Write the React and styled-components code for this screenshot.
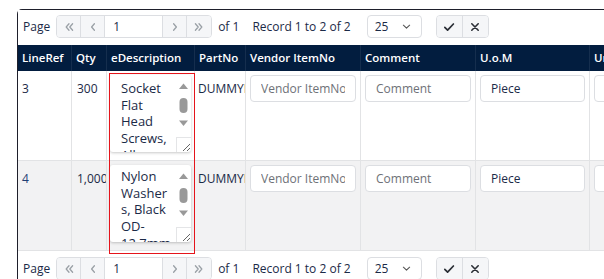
import React from 'react';
import styled, { createGlobalStyle } from 'styled-components';

const GlobalStyle = createGlobalStyle`
  html, body { margin: 0; padding: 0; background: #fff; overflow: hidden; }
  body { font-family: "Open Sans", "Noto Sans", sans-serif; font-size: 12px; color: #1b2a47; }
  * { box-sizing: border-box; }
`;

const COLS = '54px 35px 88px 51px 115px 115px 114px 115px';

const Frame = styled.div`
  position: relative;
  margin: 9px 0 0 17px;
  width: 720px;
  border-top: 1px solid #1e1f2b;
  border-left: 1px solid #1e1f2b;
  border-top-left-radius: 5px;
`;

const Pager = styled.div`
  display: flex;
  align-items: flex-start;
  height: ${p => (p.$bottom ? '30px' : '35px')};
  padding: ${p => (p.$bottom ? '6px' : '5px')} 0 0 5px;
  background: #fff;
`;

const Label = styled.span`
  line-height: 23px;
  margin-left: ${p => p.$gap || 0}px;
  white-space: nowrap;
  color: #1b2a47;
`;

const Group = styled.div`
  display: flex;
  height: 23px;
  margin-left: ${p => p.$gap || 0}px;
  border: 1px solid #dcdee2;
  border-radius: 4px;
  overflow: hidden;
`;

const NavButton = styled.div`
  width: ${p => p.$w || 24}px;
  height: 100%;
  display: flex;
  align-items: center;
  justify-content: center;
  background: #f5f6f8;
  border-right: 1px solid #dcdee2;
  &:last-child { border-right: none; }
`;

const PageInput = styled.div`
  width: 58px;
  height: 100%;
  background: #fff;
  border-right: 1px solid #dcdee2;
  padding-left: 8px;
  line-height: 21px;
  color: #1b2a47;
`;

const Select = styled.div`
  display: flex;
  align-items: center;
  justify-content: space-between;
  width: 55px;
  height: 23px;
  margin-left: 16px;
  padding: 0 9px 0 7px;
  border: 1px solid #dcdee2;
  border-radius: 4px;
  background: #fff;
  color: #1b2a47;
`;

const HeaderRow = styled.div`
  display: grid;
  grid-template-columns: ${COLS};
  height: 26px;
  background: #021d3f;
`;

const HeaderCell = styled.div`
  padding: 0 4px;
  line-height: 26px;
  font-size: 11.5px;
  color: #fff;
  font-weight: 600;
  white-space: nowrap;
  overflow: hidden;
  border-right: 1px solid rgba(255, 255, 255, 0.08);
`;

const Row = styled.div`
  display: grid;
  grid-template-columns: ${COLS};
  height: 90px;
  background: ${p => (p.$alt ? '#f2f2f3' : '#fff')};
  border-bottom: 1px solid #e2e3e5;
`;

const Cell = styled.div`
  padding: 4px;
  padding-left: ${p => p.$pl || 4}px;
  overflow: hidden;
  border-right: 1px solid #e2e3e5;
`;

const CellText = styled.div`
  line-height: 27px;
  white-space: nowrap;
  color: ${p => (p.$link ? '#1f3f73' : '#1b2a47')};
`;

const Field = styled.input`
  display: block;
  width: 100%;
  height: 27px;
  padding: 0 10px;
  border: 1px solid #dcdee2;
  border-radius: 4px;
  background: #fff;
  font-family: "Open Sans", "Noto Sans", sans-serif;
  font-size: 12px;
  color: #1b2a47;
  outline: none;
  &::placeholder { color: #6e7177; }
`;

const DescBox = styled.div`
  display: flex;
  width: 81px;
  height: 77px;
  margin-left: -1px;
  background: #fff;
  border-radius: 3px;
  box-shadow: 0 1px 3px rgba(0, 0, 0, 0.22);
  overflow: hidden;
`;

const DescText = styled.div`
  flex: 1;
  padding: ${p => p.$pt || 5}px 4px 0 11px;
  font-size: 13px;
  line-height: 16.7px;
  color: #1b2a47;
  overflow: hidden;
  overflow-wrap: break-word;
`;

const ScrollCol = styled.div`
  width: 15px;
  flex: none;
  display: flex;
  flex-direction: column;
  justify-content: space-between;
`;

const Grip = styled.div`
  width: 15px;
  height: 15px;
  border-top: 1px solid #e4e5e7;
  border-left: 1px solid #e4e5e7;
  display: flex;
  align-items: flex-end;
  justify-content: flex-end;
`;

const Annotation = styled.div`
  position: absolute;
  left: 91px;
  top: 63px;
  width: 86px;
  height: 181px;
  border: 1px solid #e5141b;
  pointer-events: none;
`;

const Icon = ({ d, color = '#9aa0a6', w = 1.3, size = 12 }) => (
  <svg width={size} height={size} viewBox="0 0 12 12" fill="none">
    <path d={d} stroke={color} strokeWidth={w} strokeLinecap="round" strokeLinejoin="round" />
  </svg>
);

const P = {
  first: 'M6 2.8 3.2 6 6 9.2M9.6 2.8 6.8 6l2.8 3.2',
  prev: 'M7.4 2.8 4.6 6l2.8 3.2',
  next: 'M4.6 2.8 7.4 6 4.6 9.2',
  last: 'M2.4 2.8 5.2 6 2.4 9.2M6 2.8 8.8 6 6 9.2',
  check: 'M1.8 6.4 4.6 9.2 10.4 3',
  x: 'M2.8 2.8 9.2 9.2M9.2 2.8 2.8 9.2',
  down: 'M2.6 4.6 6 7.8 9.4 4.6',
};

const PagerBar = ({ bottom }) => (
  <Pager $bottom={bottom}>
    <Label>Page</Label>
    <Group $gap={6}>
      <NavButton><Icon d={P.first} /></NavButton>
      <NavButton><Icon d={P.prev} /></NavButton>
      <PageInput>1</PageInput>
      <NavButton><Icon d={P.next} /></NavButton>
      <NavButton><Icon d={P.last} /></NavButton>
    </Group>
    <Label $gap={6}>of 1</Label>
    <Label $gap={13}>Record 1 to 2 of 2</Label>
    <Select>
      <span>25</span>
      <Icon d={P.down} color="#555" w={1.2} size={11} />
    </Select>
    <Group $gap={14}>
      <NavButton $w={26}><Icon d={P.check} color="#2b2f36" w={1.7} /></NavButton>
      <NavButton $w={25}><Icon d={P.x} color="#2b2f36" w={1.6} /></NavButton>
    </Group>
  </Pager>
);

const ScrollBar = () => (
  <ScrollCol>
    <svg width="15" height="58" viewBox="0 0 15 58">
      <polygon points="3,14 12,14 7.5,8.5" fill="#999" />
      <rect x="3.5" y="23" width="8" height="15" rx="4" fill="#999" />
      <polygon points="3,45.5 12,45.5 7.5,51" fill="#999" />
    </svg>
    <Grip>
      <svg width="12" height="12" viewBox="0 0 12 12">
        <path d="M11 4 4 11M11 8 8 11" stroke="#666" strokeWidth="1" />
      </svg>
    </Grip>
  </ScrollCol>
);

const rows = [
  { line: '3', qty: '300', desc: 'Socket Flat Head Screws, Alloy Steel', part: 'DUMMYPART', alt: false, pt: 5 },
  { line: '4', qty: '1,000', desc: 'Nylon Washers, Black OD-12.7mm ID', part: 'DUMMYPART', alt: true, pt: 3 },
];

const headers = ['LineRef', 'Qty', 'eDescription', 'PartNo', 'Vendor ItemNo', 'Comment', 'U.o.M', 'Unit Price'];

export default function App() {
  return (
    <>
      <GlobalStyle />
      <Frame>
        <PagerBar />
        <HeaderRow>
          {headers.map(h => <HeaderCell key={h}>{h}</HeaderCell>)}
        </HeaderRow>
        {rows.map(r => (
          <Row key={r.line} $alt={r.alt}>
            <Cell><CellText $link={r.alt}>{r.line}</CellText></Cell>
            <Cell $pl={5}><CellText>{r.qty}</CellText></Cell>
            <Cell>
              <DescBox>
                <DescText $pt={r.pt}>{r.desc}</DescText>
                <ScrollBar />
              </DescBox>
            </Cell>
            <Cell $pl={3}><CellText>{r.part}</CellText></Cell>
            <Cell><Field placeholder="Vendor ItemNo" readOnly /></Cell>
            <Cell><Field placeholder="Comment" readOnly /></Cell>
            <Cell><Field defaultValue="Piece" readOnly /></Cell>
            <Cell><Field readOnly /></Cell>
          </Row>
        ))}
        <PagerBar bottom />
        <Annotation />
      </Frame>
    </>
  );
}
